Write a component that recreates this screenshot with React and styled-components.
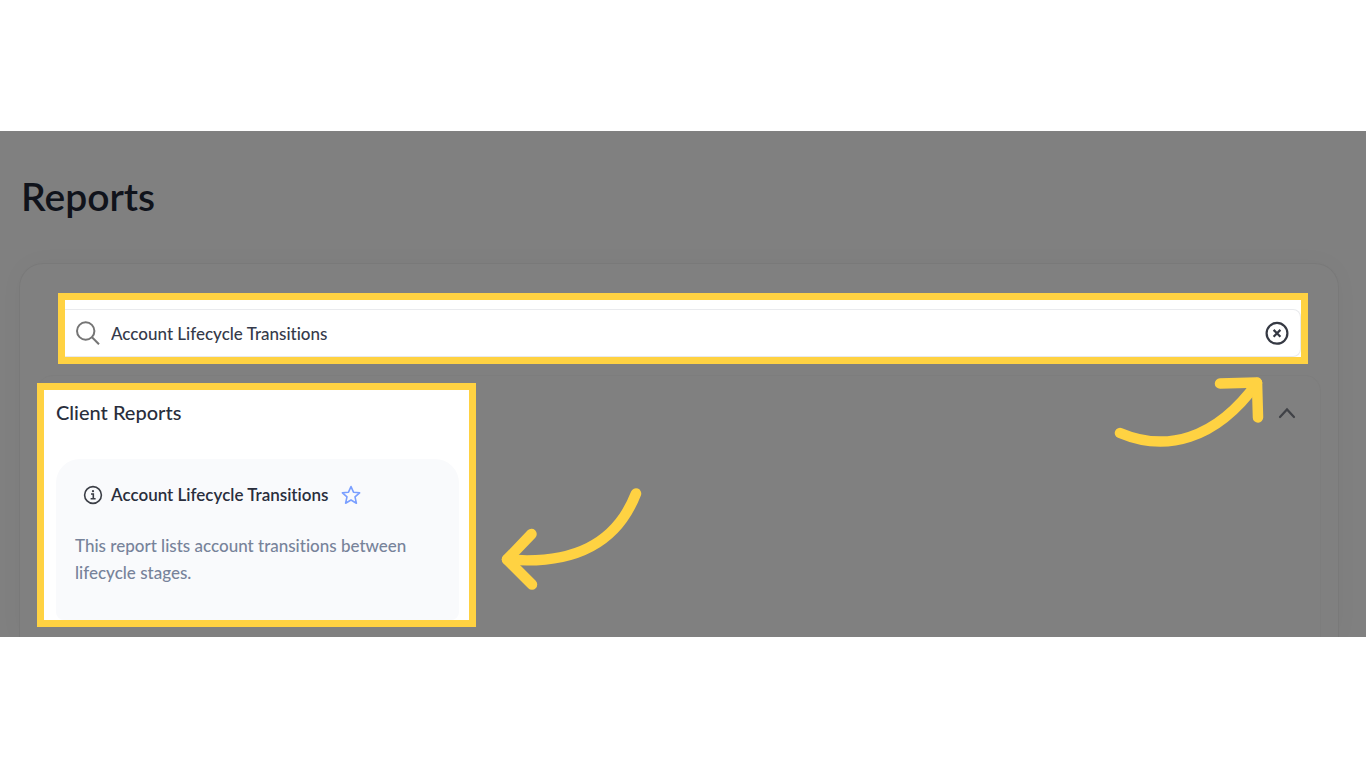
import React from "react";
import styled, { createGlobalStyle } from "styled-components";

const GlobalStyle = createGlobalStyle`
  * {
    box-sizing: border-box;
  }
  body {
    margin: 0;
    background: #ffffff;
    font-family: Lato, "Open Sans", sans-serif;
    font-variant-ligatures: none;
  }
`;

const Page = styled.div`
  min-height: 100vh;
  display: flex;
  flex-direction: column;
  justify-content: center;
`;

const Stage = styled.main`
  padding: 41px 27px 0 19px;
  background: #808080;
  overflow: hidden;
`;

const Title = styled.h1`
  margin: 0 0 43px;
  padding-left: 2px;
  color: #10131b;
  font-size: 39px;
  font-weight: 600;
  line-height: 48px;
`;

const Panel = styled.section`
  padding: 29px 17px 0;
  border: 1px solid #797979;
  border-bottom: 0;
  border-radius: 24px 24px 0 0;
  box-shadow: 0 0 24px rgba(0, 0, 0, 0.03);
`;

const Highlight = styled.div`
  position: relative;
  border: 7px solid #ffd242;
  background: #ffffff;
`;

const SearchHighlight = styled(Highlight)`
  margin: 0 13px 11px 21px;
  padding-top: 9px;
`;

const SearchBox = styled.label`
  display: flex;
  align-items: center;
  gap: 11px;
  height: 48px;
  padding: 0 11px;
  border: 1px solid #e9eaed;
  border-left: 0;
  border-radius: 0 8px 8px 0;
`;

const SearchInput = styled.input`
  flex: 1;
  min-width: 0;
  padding: 0;
  border: 0;
  outline: 0;
  background: transparent;
  color: #353a4a;
  font-family: inherit;
  font-size: 17px;
  font-weight: 500;
  line-height: 27px;
  font-variant-ligatures: none;
`;

const IconButton = styled.button`
  display: flex;
  padding: 0;
  border: 0;
  background: none;
  color: ${props => props.color};
  cursor: pointer;
`;

const Group = styled.section`
  display: flex;
  justify-content: space-between;
  align-items: flex-start;
  padding: 7px 23px 10px 0;
  border: 1px solid #7d7d7d;
  border-left: 0;
  border-bottom: 0;
  border-radius: 16px 16px 0 0;
`;

const GroupHighlight = styled(Highlight)`
  width: 439px;
  padding: 8px 10px 0 12px;
`;

const GroupTitle = styled.h2`
  margin: 0 0 33px;
  color: #292e3c;
  font-size: 20px;
  font-weight: 500;
  line-height: 28px;
`;

const Card = styled.article`
  height: 161px;
  padding: 22px 18px 0 19px;
  border-radius: 24px 24px 8px 8px;
  background: #f9fafc;
`;

const CardHeader = styled.div`
  display: flex;
  align-items: center;
  gap: 8px;
  margin-bottom: 24px;
  padding-left: 8px;
`;

const CardTitle = styled.h3`
  margin: 0;
  padding-right: 5px;
  color: #292e3c;
  font-size: 17px;
  font-weight: 600;
  line-height: 27px;
`;

const Description = styled.p`
  margin: 0;
  color: #77839a;
  font-size: 17px;
  font-weight: 500;
  line-height: 27px;
`;

const Toggle = styled(IconButton)`
  margin-top: 20px;
`;

const Arrow = styled.svg`
  position: absolute;
  z-index: 1;
  fill: none;
  stroke: #ffd242;
  stroke-width: 10.5;
  stroke-linecap: round;
  stroke-linejoin: round;
  pointer-events: none;
`;

const ClearArrow = styled(Arrow)`
  top: 72px;
  right: 31px;
`;

const ResultArrow = styled(Arrow)`
  top: 94px;
  left: 452px;
`;

const SearchIcon = () => (
  <svg width="24" height="24" viewBox="0 0 24 24" fill="none" stroke="#757575" strokeWidth="2">
    <circle cx="9.7" cy="10" r="8.7" />
    <path d="M16 16.300l7 7" />
  </svg>
);

const ClearIcon = () => (
  <svg width="24" height="24" viewBox="0 0 24 24" fill="none" stroke="currentColor" strokeWidth="2.2">
    <circle cx="12" cy="12.3" r="10.4" />
    <path d="M8.600 8.900l6.800 6.800M15.400 8.900l-6.800 6.800" />
  </svg>
);

const InfoIcon = () => (
  <svg width="20" height="20" viewBox="0 0 20 20" fill="none" stroke="currentColor" strokeWidth="1.6">
    <circle cx="10" cy="10" r="8.4" />
    <path d="M8 9h2.3v4.6M7.6 13.8h5" />
    <circle cx="10" cy="6.2" r="1.1" fill="currentColor" stroke="none" />
  </svg>
);

const StarIcon = () => (
  <svg width="20" height="20" viewBox="0 0 20 20" fill="none" stroke="currentColor" strokeWidth="1.6" strokeLinejoin="round">
    <path d="M10 1.6l2.5 5.6 6.1.6-4.6 4.1 1.4 6.3-5.4-3.2-5.4 3.2L6 11.9 1.4 7.8l6.1-.6z" />
  </svg>
);

const ChevronIcon = () => (
  <svg width="20" height="20" viewBox="0 0 20 20" fill="none" stroke="currentColor" strokeWidth="2.2" strokeLinecap="round">
    <path d="M3 14l7-7.6L17 14" />
  </svg>
);

const App = () => (
  <Page>
    <GlobalStyle />
    <Stage>
      <Title>Reports</Title>
      <Panel>
        <SearchHighlight>
          <SearchBox>
            <SearchIcon />
            <SearchInput
              type="text"
              aria-label="Search reports"
              defaultValue="Account Lifecycle Transitions"
            />
            <IconButton type="button" color="#353943" aria-label="Clear search">
              <ClearIcon />
            </IconButton>
          </SearchBox>
          <ClearArrow width="160" height="80" viewBox="0 0 160 80">
            <path d="M10 61C55 80 105 69 147 11" />
            <path d="M110 11.500L147 10.500L148 45.500" />
          </ClearArrow>
        </SearchHighlight>

        <Group>
          <GroupHighlight>
            <GroupTitle>Client Reports</GroupTitle>
            <Card>
              <CardHeader>
                <IconButton type="button" color="#3b3e46" aria-label="Report info">
                  <InfoIcon />
                </IconButton>
                <CardTitle>Account Lifecycle Transitions</CardTitle>
                <IconButton type="button" color="#7a9fff" aria-label="Add to favourites">
                  <StarIcon />
                </IconButton>
              </CardHeader>
              <Description>
                This report lists account transitions between lifecycle stages.
              </Description>
            </Card>
            <ResultArrow width="150" height="110" viewBox="0 0 150 110">
              <path d="M140 9.500C120 61 76 81 11 75.500" />
              <path d="M35.500 50L11 75.500L36 100.500" />
            </ResultArrow>
          </GroupHighlight>
          <Toggle type="button" color="#404247" aria-label="Collapse Client Reports">
            <ChevronIcon />
          </Toggle>
        </Group>
      </Panel>
    </Stage>
  </Page>
);

export default App;
